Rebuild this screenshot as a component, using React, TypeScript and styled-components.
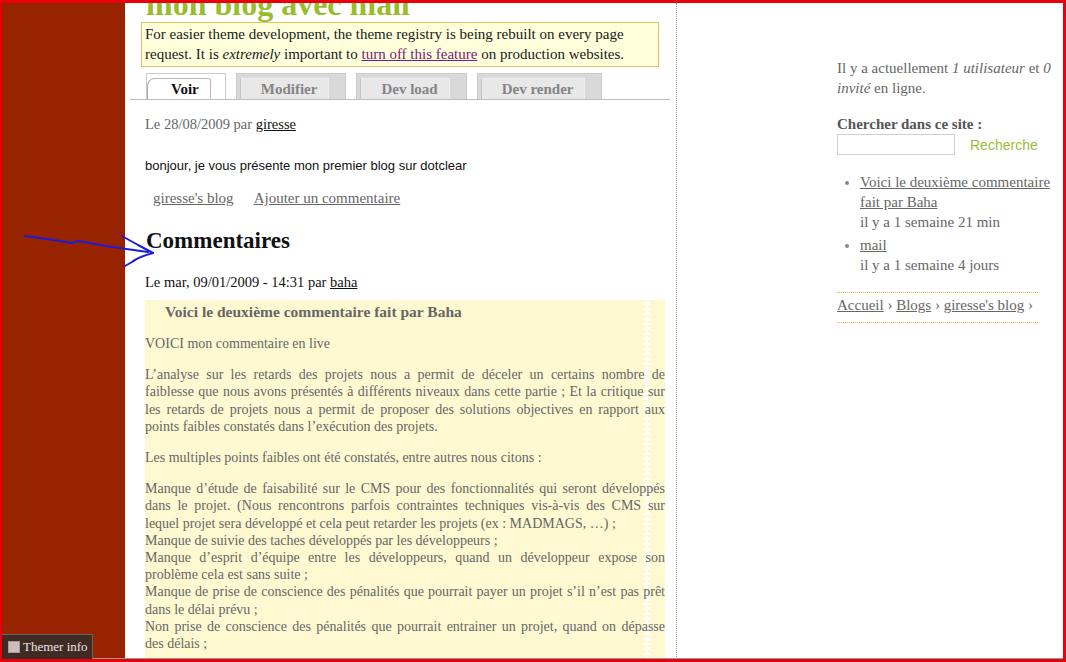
import React from 'react';
import styled, {createGlobalStyle} from 'styled-components';

const GlobalStyle = createGlobalStyle`
    html, body {
        margin: 0;
        padding: 0;
        overflow: hidden;
        background: #fff;
    }
    body {
        font-family: "Liberation Serif", "Times New Roman", serif;
    }
`;

const Frame = styled.div`
    position: relative;
    width: 1066px;
    height: 662px;
    box-sizing: border-box;
    border-style: solid;
    border-color: #e8000b;
    border-width: 3px 3px 3px 2px;
    display: flex;
    overflow: hidden;
    background: #fff;

    &::after {
        content: '';
        position: absolute;
        left: 0;
        right: 0;
        bottom: 0;
        height: 1px;
        background: #9a9a9a;
    }
`;

const LeftBar = styled.div`
    width: 123px;
    flex-shrink: 0;
    background: #982300;
`;

const Main = styled.div`
    width: 540px;
    flex-shrink: 0;
    padding: 0 6px 0 5px;
    border-right: 1px dotted #9a9a9a;
`;

const SiteTitle = styled.h1`
    margin: -15px 0 0 16px;
    font-size: 32px;
    line-height: 32px;
    font-weight: bold;
    color: #97bd2f;
    white-space: nowrap;
`;

const Notice = styled.div`
    margin: 2px 11px 0 11px;
    padding: 1px 3px 2px;
    border: 1px solid #e2c463;
    background: #ffffdc;
    font-size: 15px;
    line-height: 20px;
    color: #1a1a1a;

    a {
        color: #7b1a7b;
        text-decoration: underline;
    }
`;

const Tabs = styled.div`
    display: flex;
    gap: 10px;
    margin-top: 6px;
    padding-left: 16px;
    border-bottom: 1px solid #bdbdbd;
`;

const TabOuter = styled.div<{$active?: boolean}>`
    height: 26px;
    box-sizing: border-box;
    display: flex;
    align-items: flex-end;
    padding: 4px ${({$active}) => ($active ? '14px' : '16px')} 0 ${({$active}) => ($active ? '0' : '3px')};
    border: 1px solid #cbcbcb;
    border-bottom: none;
    background: ${({$active}) => ($active ? '#fff' : '#d9d9d9')};
`;

const TabInner = styled.span<{$active?: boolean}>`
    height: 21px;
    box-sizing: border-box;
    padding: 0 11px 0 ${({$active}) => ($active ? '23px' : '20px')};
    border: 1px solid ${({$active}) => ($active ? '#b8b8b8' : '#f0f0f0')};
    border-left-color: ${({$active}) => ($active ? '#a8a8a8' : '#c4c4c4')};
    border-bottom: none;
    border-radius: ${({$active}) => ($active ? '8px 3px 0 0' : '0')};
    background: ${({$active}) => ($active ? '#fff' : '#e8e8e8')};
    font-size: 15px;
    font-weight: bold;
    line-height: 20px;
    color: ${({$active}) => ($active ? '#111' : '#858585')};
`;

const Meta = styled.div<{$dark?: boolean; $top: number}>`
    margin: ${({$top}) => $top}px 0 0 15px;
    font-size: 14.5px;
    line-height: 20px;
    color: ${({$dark}) => ($dark ? '#111' : '#666')};

    a {
        color: #111;
        text-decoration: underline;
    }
`;

const Teaser = styled.p`
    margin: 24px 0 0 15px;
    font-family: "Liberation Sans", Arial, sans-serif;
    font-size: 13px;
    line-height: 16px;
    color: #111;
`;

const NodeLinks = styled.div`
    display: flex;
    gap: 20px;
    margin: 14px 0 0 23px;
    font-size: 15px;
    line-height: 20px;

    a {
        color: #666;
        text-decoration: underline;
    }
`;

const SectionTitle = styled.h2`
    margin: 19px 0 0 16px;
    font-size: 23px;
    line-height: 28px;
    font-weight: bold;
    color: #111;
`;

const CommentBox = styled.div`
    margin: 8px 0 0 15px;
    width: 520px;
    padding: 2px 0 30px;
    background:
        linear-gradient(to bottom right, transparent 50%, rgba(255, 255, 255, 0.95) 50%) 498px 0 / 4px 5px repeat-y,
        linear-gradient(to bottom left, transparent 50%, rgba(255, 255, 255, 0.95) 50%) 502px 0 / 4px 5px repeat-y,
        #fff9d2;
    color: #666;
`;

const CommentTitle = styled.h3`
    margin: 0;
    padding-left: 20px;
    font-size: 15.5px;
    line-height: 20px;
    font-weight: bold;
    color: #666;
`;

const CommentText = styled.p`
    margin: 14px 0 0;
    font-size: 14px;
    line-height: 17.2px;
    text-align: justify;

    &:first-of-type {
        margin-top: 13px;
    }
`;

const Line = styled.span<{$fill?: boolean}>`
    display: block;
    white-space: nowrap;
    text-align-last: ${({$fill}) => ($fill ? 'justify' : 'auto')};
`;

const Sidebar = styled.div`
    flex: 1;
    padding: 55px 0 0 160px;
    font-size: 15px;
    line-height: 20px;
    color: #666;

    a {
        color: #666;
        text-decoration: underline;
    }
`;

const Online = styled.p`
    margin: 0;
`;

const BlockTitle = styled.h3`
    margin: 16px 0 0;
    font-size: 15px;
    line-height: 20px;
    font-weight: bold;
    color: #555;
`;

const SearchRow = styled.div`
    display: flex;
    align-items: center;
    gap: 15px;
`;

const SearchInput = styled.input`
    width: 118px;
    height: 21px;
    box-sizing: border-box;
    margin: 0;
    border: 1px solid #cfcfcf;
    background: #fff;
`;

const SearchButton = styled.span`
    font-family: "Liberation Sans", Arial, sans-serif;
    font-size: 14px;
    color: #9dbb3c;
`;

const RecentList = styled.ul`
    margin: 17px 0 0;
    padding-left: 23px;

    li {
        margin-bottom: 3px;
    }
    li::marker {
        color: #888;
    }
`;

const Breadcrumb = styled.div`
    margin-top: 17px;
    width: 201px;
    padding: 2px 0 7px;
    border-top: 1px dotted #d6b93f;
    border-bottom: 1px dotted #d6b93f;
`;

const ThemerInfo = styled.div`
    position: absolute;
    left: 0;
    bottom: 0;
    width: 91px;
    height: 25px;
    box-sizing: border-box;
    display: flex;
    align-items: center;
    gap: 3px;
    padding-left: 6px;
    background: #3f2a24;
    border-top: 1px solid #6d6460;
    border-right: 1px solid #6d6460;
    font-size: 13px;
    color: #ece4e0;
    z-index: 2;
`;

const Check = styled.span`
    width: 12px;
    height: 12px;
    box-sizing: border-box;
    background: #cdbcbc;
    border: 1px solid #a99;
`;

const Arrow = styled.svg`
    position: absolute;
    left: 0;
    top: 0;
    pointer-events: none;
`;

const tabs = ['Voir', 'Modifier', 'Dev load', 'Dev render'];

const analyse: [string, boolean][] = [
    ['L’analyse sur les retards des projets nous a permit de déceler un certains nombre de', true],
    ['faiblesse que nous avons présentés à différents niveaux dans cette partie ; Et la critique sur', true],
    ['les retards de projets nous a permit de proposer des solutions objectives en rapport aux', true],
    ['points faibles constatés dans l’exécution des projets.', false],
];

const manques: [string, boolean][] = [
    ['Manque d’étude de faisabilité sur le CMS pour des fonctionnalités qui seront développés', true],
    ['dans le projet. (Nous rencontrons parfois contraintes techniques vis-à-vis des CMS sur', true],
    ['lequel projet sera développé et cela peut retarder les projets (ex : MADMAGS, …) ;', false],
    ['Manque de suivie des taches développés par les développeurs ;', false],
    ['Manque d’esprit d’équipe entre les développeurs, quand un développeur expose son', true],
    ['problème cela est sans suite ;', false],
    ['Manque de prise de conscience des pénalités que pourrait payer un projet s’il n’est pas prêt', true],
    ['dans le délai prévu ;', false],
    ['Non prise de conscience des pénalités que pourrait entrainer un projet, quand on dépasse', true],
    ['des délais ;', false],
];

export default function App() {
    return (
        <>
            <GlobalStyle/>
            <Frame>
                <LeftBar/>
                <Main>
                    <SiteTitle>mon blog avec mail</SiteTitle>
                    <Notice>
                        For easier theme development, the theme registry is being rebuilt on every page
                        request. It is <em>extremely</em> important to <a href="#">turn off this feature</a> on
                        production websites.
                    </Notice>
                    <Tabs>
                        {tabs.map((t, i) => (
                            <TabOuter key={t} $active={i === 0}>
                                <TabInner $active={i === 0}>{t}</TabInner>
                            </TabOuter>
                        ))}
                    </Tabs>
                    <Meta $top={14}>
                        Le 28/08/2009 par <a href="#">giresse</a>
                    </Meta>
                    <Teaser>bonjour, je vous présente mon premier blog sur dotclear</Teaser>
                    <NodeLinks>
                        <a href="#">giresse's blog</a>
                        <a href="#">Ajouter un commentaire</a>
                    </NodeLinks>
                    <SectionTitle>Commentaires</SectionTitle>
                    <Meta $dark $top={17}>
                        Le mar, 09/01/2009 - 14:31 par <a href="#">baha</a>
                    </Meta>
                    <CommentBox>
                        <CommentTitle>Voici le deuxième commentaire fait par Baha</CommentTitle>
                        <CommentText>VOICI mon commentaire en live</CommentText>
                        <CommentText>
                            {analyse.map(([text, fill]) => (
                                <Line key={text} $fill={fill}>{text}</Line>
                            ))}
                        </CommentText>
                        <CommentText>Les multiples points faibles ont été constatés, entre autres nous citons :</CommentText>
                        <CommentText>
                            {manques.map(([text, fill]) => (
                                <Line key={text} $fill={fill}>{text}</Line>
                            ))}
                        </CommentText>
                    </CommentBox>
                </Main>
                <Sidebar>
                    <Online>
                        Il y a actuellement <em>1 utilisateur</em> et <em>0 invité</em> en ligne.
                    </Online>
                    <BlockTitle>Chercher dans ce site :</BlockTitle>
                    <SearchRow>
                        <SearchInput type="text"/>
                        <SearchButton>Recherche</SearchButton>
                    </SearchRow>
                    <RecentList>
                        <li>
                            <a href="#">Voici le deuxième commentaire fait par Baha</a>
                            <br/>
                            il y a 1 semaine 21 min
                        </li>
                        <li>
                            <a href="#">mail</a>
                            <br/>
                            il y a 1 semaine 4 jours
                        </li>
                    </RecentList>
                    <Breadcrumb>
                        <a href="#">Accueil</a> › <a href="#">Blogs</a> › <a href="#">giresse's blog</a> ›
                    </Breadcrumb>
                </Sidebar>
                <Arrow width="170" height="280" viewBox="0 0 170 280">
                    <g fill="none" stroke="#1c1cd6" strokeWidth="2" strokeLinecap="round" strokeLinejoin="round">
                        <path d="M23 233 L52 237 L70 240 L76 238 L110 244 L146 249"/>
                        <path d="M120 233 L136 242 L151 250"/>
                        <path d="M151 250 Q136 254 130 259 L123 263"/>
                    </g>
                </Arrow>
                <ThemerInfo>
                    <Check/>
                    Themer info
                </ThemerInfo>
            </Frame>
        </>
    );
}
